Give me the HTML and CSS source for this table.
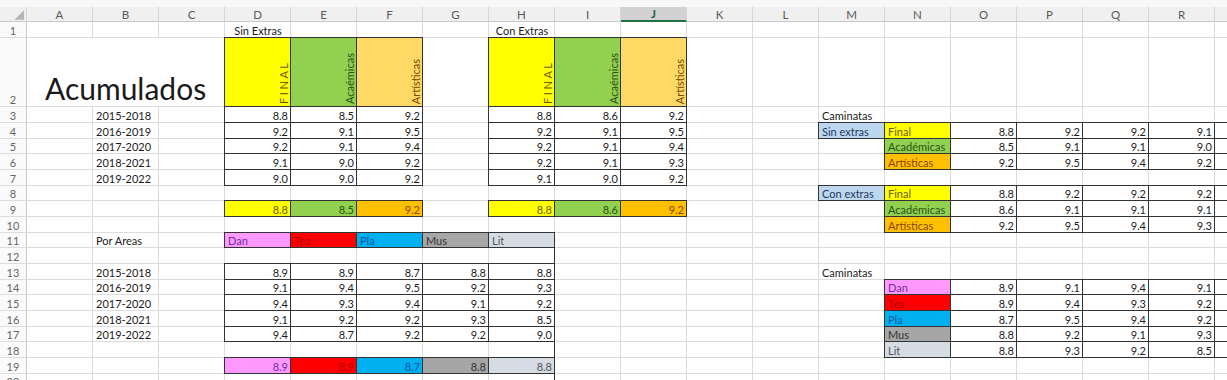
FILE: index.html
```html
<!DOCTYPE html>
<html lang="es">
<head>
<meta charset="utf-8">
<title>Acumulados</title>
<link rel="stylesheet" href="styles.css">
</head>
<body>
<div class="app">
<div class="strip"></div>
<div class="sheet">
<div class="r">
<div class="ch corner"><svg width="27" height="15" viewBox="0 0 27 15"><polygon points="25,3 25,13 15,13" fill="#b4b4b4"/></svg></div>
<div class="ch">A</div><div class="ch">B</div><div class="ch">C</div><div class="ch">D</div><div class="ch">E</div><div class="ch">F</div><div class="ch">G</div><div class="ch">H</div><div class="ch">I</div><div class="ch sel">J</div><div class="ch">K</div><div class="ch">L</div><div class="ch">M</div><div class="ch">N</div><div class="ch">O</div><div class="ch">P</div><div class="ch">Q</div><div class="ch">R</div><div class="ch"></div>
</div>
<div class="r">
<div class="rh">1</div><div></div><div></div><div></div><div class="ctr">Sin Extras</div><div></div><div></div><div></div><div class="ctr">Con Extras</div><div></div><div></div><div></div><div></div><div></div><div></div><div></div><div></div><div></div><div></div><div></div>
</div>
<div class="r">
<div class="rh">2</div><div class="big">Acumulados</div><div class="b vt yel"><span>F I N A L</span></div><div class="b vt grn"><span>Acaémicas</span></div><div class="b vt lor"><span>Artísticas</span></div><div></div><div class="b vt yel"><span>F I N A L</span></div><div class="b vt grn"><span>Acaémicas</span></div><div class="b vt lor"><span>Artísticas</span></div><div></div><div></div><div></div><div></div><div></div><div></div><div></div><div></div><div></div>
</div>
<div class="r">
<div class="rh">3</div><div></div><div>2015-2018</div><div></div><div class="b n">8.8</div><div class="b n">8.5</div><div class="b n">9.2</div><div></div><div class="b n">8.8</div><div class="b n">8.6</div><div class="b n">9.2</div><div></div><div></div><div>Caminatas</div><div></div><div></div><div></div><div></div><div></div><div></div>
</div>
<div class="r">
<div class="rh">4</div><div></div><div>2016-2019</div><div></div><div class="b n">9.2</div><div class="b n">9.1</div><div class="b n">9.5</div><div></div><div class="b n">9.2</div><div class="b n">9.1</div><div class="b n">9.5</div><div></div><div></div><div class="b lbl">Sin extras</div><div class="b yel">Final</div><div class="b n">8.8</div><div class="b n">9.2</div><div class="b n">9.2</div><div class="b n">9.1</div><div class="b n"></div>
</div>
<div class="r">
<div class="rh">5</div><div></div><div>2017-2020</div><div></div><div class="b n">9.2</div><div class="b n">9.1</div><div class="b n">9.4</div><div></div><div class="b n">9.2</div><div class="b n">9.1</div><div class="b n">9.4</div><div></div><div></div><div></div><div class="b grn">Académicas</div><div class="b n">8.5</div><div class="b n">9.1</div><div class="b n">9.1</div><div class="b n">9.0</div><div class="b n"></div>
</div>
<div class="r">
<div class="rh">6</div><div></div><div>2018-2021</div><div></div><div class="b n">9.1</div><div class="b n">9.0</div><div class="b n">9.2</div><div></div><div class="b n">9.2</div><div class="b n">9.1</div><div class="b n">9.3</div><div></div><div></div><div></div><div class="b org">Artísticas</div><div class="b n">9.2</div><div class="b n">9.5</div><div class="b n">9.4</div><div class="b n">9.2</div><div class="b n"></div>
</div>
<div class="r">
<div class="rh">7</div><div></div><div>2019-2022</div><div></div><div class="b n">9.0</div><div class="b n">9.0</div><div class="b n">9.2</div><div></div><div class="b n">9.1</div><div class="b n">9.0</div><div class="b n">9.2</div><div></div><div></div><div></div><div></div><div></div><div></div><div></div><div></div><div></div>
</div>
<div class="r">
<div class="rh">8</div><div></div><div></div><div></div><div></div><div></div><div></div><div></div><div></div><div></div><div></div><div></div><div></div><div class="b lbl">Con extras</div><div class="b yel">Final</div><div class="b n">8.8</div><div class="b n">9.2</div><div class="b n">9.2</div><div class="b n">9.2</div><div class="b n"></div>
</div>
<div class="r">
<div class="rh">9</div><div></div><div></div><div></div><div class="b n yel">8.8</div><div class="b n grn">8.5</div><div class="b n org">9.2</div><div></div><div class="b n yel">8.8</div><div class="b n grn">8.6</div><div class="b n org">9.2</div><div></div><div></div><div></div><div class="b grn">Académicas</div><div class="b n">8.6</div><div class="b n">9.1</div><div class="b n">9.1</div><div class="b n">9.1</div><div class="b n"></div>
</div>
<div class="r">
<div class="rh">10</div><div></div><div></div><div></div><div></div><div></div><div></div><div></div><div></div><div></div><div></div><div></div><div></div><div></div><div class="b org">Artísticas</div><div class="b n">9.2</div><div class="b n">9.5</div><div class="b n">9.4</div><div class="b n">9.3</div><div class="b n"></div>
</div>
<div class="r">
<div class="rh">11</div><div></div><div>Por Areas</div><div></div><div class="b pnk">Dan</div><div class="b red">Tea</div><div class="b blu">Pla</div><div class="b gry">Mus</div><div class="b lgr">Lit</div><div></div><div></div><div></div><div></div><div></div><div></div><div></div><div></div><div></div><div></div><div></div>
</div>
<div class="r">
<div class="rh">12</div><div></div><div></div><div></div><div></div><div></div><div></div><div></div><div class="br"></div><div></div><div></div><div></div><div></div><div></div><div></div><div></div><div></div><div></div><div></div><div></div>
</div>
<div class="r">
<div class="rh">13</div><div></div><div>2015-2018</div><div></div><div class="b n">8.9</div><div class="b n">8.9</div><div class="b n">8.7</div><div class="b n">8.8</div><div class="b n">8.8</div><div></div><div></div><div></div><div></div><div>Caminatas</div><div></div><div></div><div></div><div></div><div></div><div></div>
</div>
<div class="r">
<div class="rh">14</div><div></div><div>2016-2019</div><div></div><div class="b n">9.1</div><div class="b n">9.4</div><div class="b n">9.5</div><div class="b n">9.2</div><div class="b n">9.3</div><div></div><div></div><div></div><div></div><div></div><div class="b pnk">Dan</div><div class="b n">8.9</div><div class="b n">9.1</div><div class="b n">9.4</div><div class="b n">9.1</div><div class="b n"></div>
</div>
<div class="r">
<div class="rh">15</div><div></div><div>2017-2020</div><div></div><div class="b n">9.4</div><div class="b n">9.3</div><div class="b n">9.4</div><div class="b n">9.1</div><div class="b n">9.2</div><div></div><div></div><div></div><div></div><div></div><div class="b red">Tea</div><div class="b n">8.9</div><div class="b n">9.4</div><div class="b n">9.3</div><div class="b n">9.2</div><div class="b n"></div>
</div>
<div class="r">
<div class="rh">16</div><div></div><div>2018-2021</div><div></div><div class="b n">9.1</div><div class="b n">9.2</div><div class="b n">9.2</div><div class="b n">9.3</div><div class="b n">8.5</div><div></div><div></div><div></div><div></div><div></div><div class="b blu">Pla</div><div class="b n">8.7</div><div class="b n">9.5</div><div class="b n">9.4</div><div class="b n">9.2</div><div class="b n"></div>
</div>
<div class="r">
<div class="rh">17</div><div></div><div>2019-2022</div><div></div><div class="b n">9.4</div><div class="b n">8.7</div><div class="b n">9.2</div><div class="b n">9.2</div><div class="b n">9.0</div><div></div><div></div><div></div><div></div><div></div><div class="b gry">Mus</div><div class="b n">8.8</div><div class="b n">9.2</div><div class="b n">9.1</div><div class="b n">9.3</div><div class="b n"></div>
</div>
<div class="r">
<div class="rh">18</div><div></div><div></div><div></div><div></div><div></div><div></div><div></div><div class="br"></div><div></div><div></div><div></div><div></div><div></div><div class="b lgr">Lit</div><div class="b n">8.8</div><div class="b n">9.3</div><div class="b n">9.2</div><div class="b n">8.5</div><div class="b n"></div>
</div>
<div class="r">
<div class="rh">19</div><div></div><div></div><div></div><div class="b n pnk">8.9</div><div class="b n red">8.9</div><div class="b n blu">8.7</div><div class="b n gry">8.8</div><div class="b n lgr">8.8</div><div></div><div></div><div></div><div></div><div></div><div></div><div></div><div></div><div></div><div></div><div></div>
</div>
<div class="r">
<div class="rh">20</div><div></div><div></div><div></div><div></div><div></div><div></div><div></div><div class="br"></div><div></div><div></div><div></div><div></div><div></div><div></div><div></div><div></div><div></div><div></div><div></div>
</div>
</div>
</div>
</body>
</html>
```

FILE: styles.css
```css
html, body {
  margin: 0;
  padding: 0;
  background: #ffffff;
  overflow: hidden;
}

.app {
  width: 1227px;
  height: 380px;
  overflow: hidden;
  font-family: "Lato", "Liberation Sans", sans-serif;
}

.strip {
  height: 7px;
  background: #f8f8f8;
}

.sheet {
  display: grid;
  grid-template-columns: 27px repeat(19, 66px);
  grid-template-rows: 15px 16px 69px 16px 16px 15px 16px 16px 15px 16px 16px 15px 16px 16px 15px 16px 16px 15px 16px 16px 15px;
}

.r {
  display: contents;
}

.r > div {
  box-sizing: border-box;
  border-right: 1px solid #dcdcdc;
  border-bottom: 1px solid #dcdcdc;
  display: flex;
  align-items: flex-end;
  padding: 0 2px 0 3px;
  white-space: nowrap;
  min-width: 0;
  font-size: 11px;
  line-height: 13px;
  color: #1c1c1c;
}

.r > .ch {
  background: #f0f0f0;
  color: #5a5a5a;
  justify-content: center;
  align-items: center;
  padding: 0;
  font-size: 11.5px;
  border-right-color: #d6d6d6;
  border-bottom-color: #c9c9c9;
}

.r > .corner {
  align-items: stretch;
  justify-content: flex-start;
}

.corner svg {
  display: block;
}

.r > .sel {
  background: #d2d2d2;
  color: #1e5c3a;
  font-weight: 700;
  border-bottom: 2px solid #217346;
}

.r > .rh {
  background: #fafafa;
  color: #666666;
  justify-content: center;
  padding: 0;
  border-right-color: #c9c9c9;
}

.r > .ctr {
  justify-content: center;
}

.r > .n {
  justify-content: flex-end;
}

.r > .big {
  grid-column: span 3;
  font-size: 30px;
  line-height: 32px;
  padding: 0 0 2px 18px;
  color: #1a1a1a;
}

.r > .br {
  border-right-color: #333333;
}

.b {
  position: relative;
}

.b::after {
  content: "";
  position: absolute;
  top: -1px;
  left: -1px;
  right: -1px;
  bottom: -1px;
  border: 1px solid #333333;
  z-index: 1;
  pointer-events: none;
}

.r > .vt {
  justify-content: flex-end;
  padding: 0 0 2px 0;
}

.vt span {
  writing-mode: vertical-rl;
  transform: rotate(180deg);
  line-height: 13px;
}

.r > .yel { background: #ffff00; color: #6e5a00; }
.r > .grn { background: #92d050; color: #2b5316; }
.r > .lor { background: #ffd966; color: #7a4a00; }
.r > .org { background: #ffc000; color: #8a4600; }
.r > .pnk { background: #ff99ff; color: #7030a0; }
.r > .red { background: #ff0000; color: #b00000; }
.r > .blu { background: #00b0f0; color: #0058a0; }
.r > .gry { background: #a6a6a6; color: #333333; }
.r > .lgr { background: #d6dce4; color: #555555; }
.r > .lbl { background: #bdd7ee; color: #1f3864; }
```
